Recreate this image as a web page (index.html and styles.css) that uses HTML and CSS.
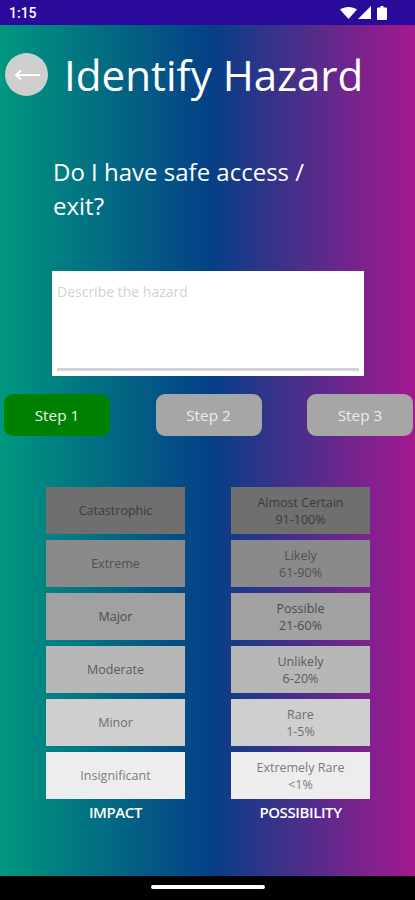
FILE: index.html
```html
<!DOCTYPE html>
<html lang="en">

<head>
  <meta charset="UTF-8" />
  <meta name="viewport" content="width=device-width, initial-scale=1.0" />
  <title>Identify Hazard</title>
  <link rel="stylesheet" href="styles.css">
</head>

<body>
  <div class="status-bar">
    <span class="clock">1:15</span>
    <div class="status-icons">
      <svg class="wifi" width="17" height="12" viewBox="0 0 17 12">
        <path d="M0 2.500C2.300.9 5.200 0 8.500 0s6.200.9 8.500 2.500L8.500 12z" fill="#fff" />
      </svg>
      <svg class="signal" width="13" height="13" viewBox="0 0 13 13">
        <path d="M13 0v13H0z" fill="#fff" />
      </svg>
      <svg width="10" height="14" viewBox="0 0 10 14">
        <path d="M3.500 0h3v1.500H9a1 1 0 0 1 1 1V13a1 1 0 0 1-1 1H1a1 1 0 0 1-1-1V2.500a1 1 0 0 1 1-1h2.500z" fill="#fff" />
      </svg>
    </div>
  </div>

  <main class="screen">
    <header class="title-row">
      <button class="back-btn" aria-label="Back">
        <svg width="26" height="12" viewBox="0 0 26 12">
          <path d="M26 6H2M7 1.500 2 6l5 4.500" fill="none" stroke="#fff" stroke-width="2" />
        </svg>
      </button>
      <h1>Identify Hazard</h1>
    </header>

    <p class="question">Do I have safe access / exit?</p>

    <div class="hazard-box">
      <span class="placeholder">Describe the hazard</span>
      <div class="underline"></div>
    </div>

    <div class="steps">
      <button class="step active">Step 1</button>
      <button class="step">Step 2</button>
      <button class="step">Step 3</button>
    </div>

    <div class="matrix">
      <div class="column">
        <div class="cell level-1">Catastrophic</div>
        <div class="cell level-2">Extreme</div>
        <div class="cell level-3">Major</div>
        <div class="cell level-4">Moderate</div>
        <div class="cell level-5">Minor</div>
        <div class="cell level-6">Insignificant</div>
        <div class="column-label">IMPACT</div>
      </div>
      <div class="column">
        <div class="cell level-1">Almost Certain<br>91-100%</div>
        <div class="cell level-2">Likely<br>61-90%</div>
        <div class="cell level-3">Possible<br>21-60%</div>
        <div class="cell level-4">Unlikely<br>6-20%</div>
        <div class="cell level-5">Rare<br>1-5%</div>
        <div class="cell level-6">Extremely Rare<br>&lt;1%</div>
        <div class="column-label">POSSIBILITY</div>
      </div>
    </div>
  </main>

  <div class="nav-bar">
    <div class="home-pill"></div>
  </div>
</body>

</html>
```

FILE: styles.css
```css
* {
  box-sizing: border-box;
}

body {
  margin: 0;
  width: 415px;
  height: 900px;
  display: flex;
  flex-direction: column;
  overflow: hidden;
  font-family: "Open Sans", Arial, sans-serif;
  background-color: #000;
}

.status-bar {
  height: 25px;
  padding: 0 28px 0 9px;
  display: flex;
  justify-content: space-between;
  align-items: center;
  background-color: #2a0a9a;
  color: #fff;
}

.clock {
  font-family: Roboto, Arial, sans-serif;
  font-size: 14px;
  font-weight: 500;
}

.status-icons {
  display: flex;
  align-items: center;
}

.signal {
  margin: 0 6px 0 1px;
}

.screen {
  height: 851px;
  padding-top: 28px;
  background: linear-gradient(90deg, #00977f 0%, #053f87 51%, #a5188f 100%);
}

.title-row {
  height: 43px;
  padding-left: 5px;
  display: flex;
  align-items: center;
  gap: 16px;
}

.back-btn {
  width: 43px;
  height: 43px;
  padding: 0;
  border: none;
  border-radius: 50%;
  display: flex;
  justify-content: center;
  align-items: center;
  background-color: #cfcfcf;
}

h1 {
  margin: 0;
  font-size: 42.100px;
  font-weight: 400;
  white-space: nowrap;
  color: #fff;
}

.question {
  width: 290px;
  margin: 59px 0 0 53px;
  font-size: 24px;
  line-height: 34px;
  color: #fff;
}

.hazard-box {
  width: 312px;
  height: 105px;
  margin: 48px 0 0 52px;
  padding: 11px 5px 5px;
  display: flex;
  flex-direction: column;
  justify-content: space-between;
  background-color: #fff;
}

.placeholder {
  font-size: 14px;
  line-height: 20px;
  color: #d2d2d2;
}

.underline {
  height: 3px;
  background-color: #d3d3dc;
}

.steps {
  margin: 18px 2px 0 4px;
  display: flex;
  gap: 45.500px;
}

.step {
  width: 106px;
  height: 42px;
  padding: 0;
  border: none;
  border-radius: 9px;
  font-family: inherit;
  font-size: 15.300px;
  font-weight: 500;
  color: #ececec;
  background-color: #a6a6a6;
}

.step.active {
  color: #eef7ee;
  background-color: #008000;
}

.matrix {
  margin: 51px 0 0 46px;
  display: flex;
  gap: 46px;
}

.column {
  width: 139px;
  display: flex;
  flex-direction: column;
  gap: 6px;
}

.cell {
  height: 47px;
  display: flex;
  justify-content: center;
  align-items: center;
  text-align: center;
  font-size: 12.500px;
  line-height: 17px;
}

.level-1 {
  background-color: #6f6f6f;
  color: #3b3b3b;
}

.level-2 {
  background-color: #8a8a8a;
  color: #505050;
}

.level-3 {
  background-color: #a1a1a1;
  color: #4c4c4c;
}

.level-4 {
  background-color: #b7b7b7;
  color: #5a5a5a;
}

.level-5 {
  background-color: #cfcfcf;
  color: #6e6e6e;
}

.level-6 {
  background-color: #ededed;
  color: #7c7c7c;
}

.column-label {
  text-align: center;
  font-size: 15px;
  font-weight: 600;
  line-height: 14px;
  letter-spacing: -0.400px;
  color: #fff;
}

.nav-bar {
  height: 24px;
  padding-top: 9px;
  display: flex;
  justify-content: center;
  background-color: #000;
}

.home-pill {
  width: 114px;
  height: 4px;
  border-radius: 2px;
  background-color: #fff;
}
```
